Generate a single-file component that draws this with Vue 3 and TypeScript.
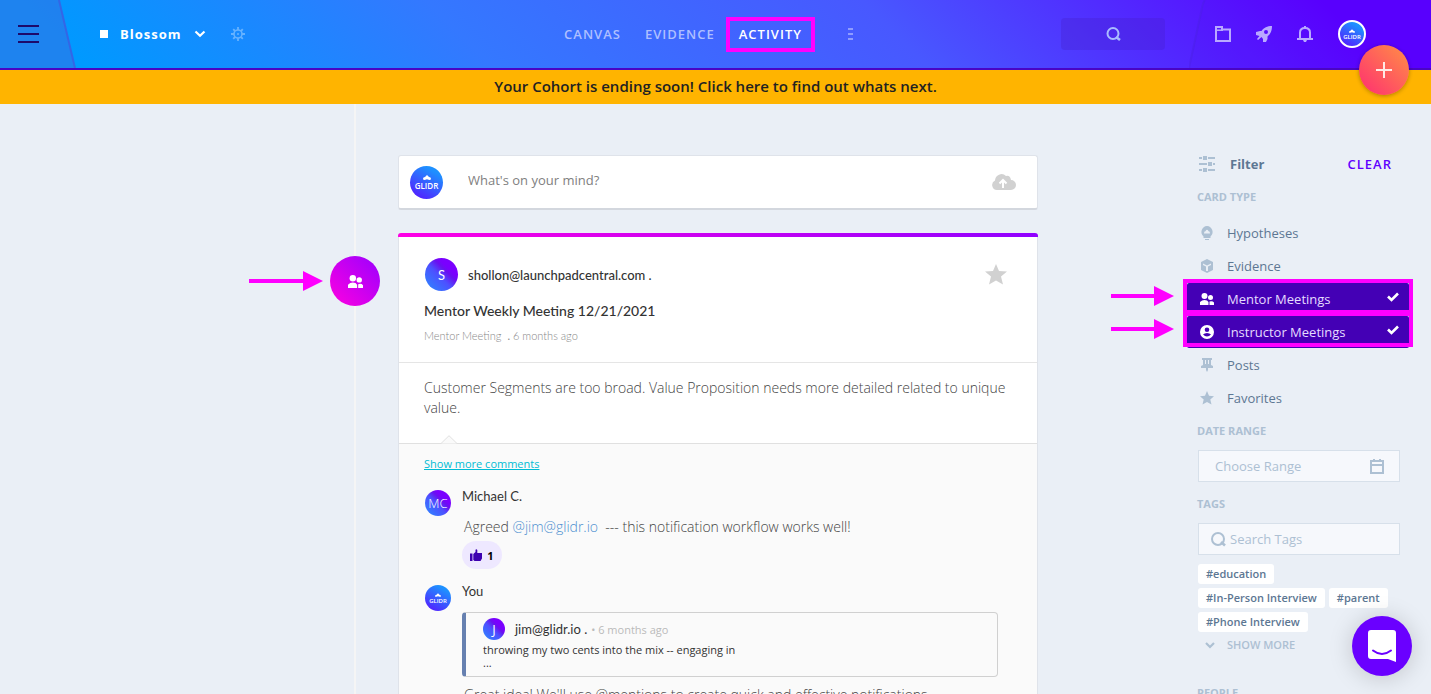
<script setup lang="ts">
import { ref } from 'vue'

interface CardType {
  id: string
  label: string
  selected: boolean
}

const navItems = ['Canvas', 'Evidence', 'Activity']
const activeNav = ref('Activity')

const cardTypes = ref<CardType[]>([
  { id: 'hypotheses', label: 'Hypotheses', selected: false },
  { id: 'evidence', label: 'Evidence', selected: false },
  { id: 'mentor', label: 'Mentor Meetings', selected: true },
  { id: 'instructor', label: 'Instructor Meetings', selected: true },
  { id: 'posts', label: 'Posts', selected: false },
  { id: 'favorites', label: 'Favorites', selected: false },
])

const tags = ['#education', '#In-Person Interview', '#parent', '#Phone Interview']
const draft = ref('')
const range = ref('')
const tagQuery = ref('')

function clearFilters(): void {
  cardTypes.value.forEach((t) => (t.selected = false))
}
</script>

<template>
  <div class="page">
    <header class="topbar">
      <svg class="slant slant-left" viewBox="0 0 76 68" aria-hidden="true">
        <path d="M0 0H59L75 68H0Z" fill="#4a62d8" fill-opacity=".4" />
        <path d="M59 0L75 68" stroke="#3c5ce2" stroke-width="2" stroke-opacity=".8" />
      </svg>
      <svg class="slant slant-right" viewBox="0 0 242 68" aria-hidden="true">
        <path d="M15 0H242V68H0Z" fill="#5000e0" fill-opacity=".08" />
        <path d="M16 0Q14 2 13 8L0 68" fill="none" stroke="#4a20e0" stroke-width="2" stroke-opacity=".4" />
      </svg>

      <div class="side">
        <button class="icon-btn menu" aria-label="Menu">
          <svg width="22" height="20" viewBox="0 0 22 20"><path d="M0 2H21M0 10H21M0 18H21" stroke="#1d0a6b" stroke-width="2" /></svg>
        </button>
        <button class="project">
          <span class="square"></span>
          <span>Blossom</span>
          <svg width="12" height="8" viewBox="0 0 12 8"><path d="M1.5 1.5L6 5.7L10.500 1.500" fill="none" stroke="#fff" stroke-width="2.200" /></svg>
        </button>
        <button class="icon-btn gear" aria-label="Settings">
          <svg width="14" height="14" viewBox="0 0 14 14" fill="none" stroke="#66b2ff">
            <circle cx="7" cy="7" r="4" stroke-width="1.600" />
            <circle cx="7" cy="7" r="1" fill="#66b2ff" stroke="none" />
            <path d="M7 0V3M7 11V14M0 7H3M11 7H14M2.200 2.200L4 4M10 10L11.800 11.800M2.200 11.800L4 10M10 4L11.800 2.200" stroke-width="1.800" />
          </svg>
        </button>
      </div>

      <nav class="nav">
        <a v-for="item in navItems" :key="item" href="#" :class="{ active: item === activeNav }" @click.prevent="activeNav = item">{{ item }}<span v-if="item === 'Activity'" class="callout callout-nav"></span></a>
        <button class="icon-btn more" aria-label="More">
          <svg width="5" height="13" viewBox="0 0 5 13" fill="#8f9cff"><path d="M0 0H5V2H0ZM0 5H5V7H0ZM0 10H5V12H0Z" /></svg>
        </button>
      </nav>

      <div class="side side-right">
        <button class="search" aria-label="Search">
          <svg width="15" height="15" viewBox="0 0 15 15" fill="none" stroke="#a9bcff" stroke-width="2"><circle cx="7" cy="6.500" r="5.500" /><path d="M10 10L14 13" stroke-width="2.600" /></svg>
        </button>
        <div class="tools">
          <button class="icon-btn" aria-label="Files">
            <svg width="16" height="16" viewBox="0 0 16 16"><path d="M1 15V1H7V3.500H15V15Z" fill="none" stroke="#b9a9ff" stroke-width="2" /><path d="M1 4.200H8" stroke="#b9a9ff" stroke-width="1.500" /></svg>
          </button>
          <button class="icon-btn" aria-label="Launch">
            <svg width="16" height="16" viewBox="0 0 16 16" fill="#b9a9ff"><path fill-rule="evenodd" d="M16 0C16 4 15 7.500 11.500 10.500V13L10 16H7V13L5.500 11L2 14L1 13L3.500 10L0 9V6L4 5H5.500C8 1.500 11 0 16 0ZM10 4A2 2 0 1 0 10 8A2 2 0 1 0 10 4Z" /></svg>
          </button>
          <button class="icon-btn" aria-label="Notifications">
            <svg width="16" height="16" viewBox="0 0 16 16"><path d="M3 13V6.500C3 3.500 5 2 8 2S13 3.500 13 6.500V13" fill="none" stroke="#b9a9ff" stroke-width="2" /><path d="M0 12H16V14H0ZM6 14H10L9 16H7ZM7 0H9V2H7Z" fill="#b9a9ff" /></svg>
          </button>
        </div>
        <button class="avatar glidr me" aria-label="Account">
          <svg viewBox="0 0 10 6"><path d="M5 0L7.500 2.500Q10 3 10 4.500Q10 6 8 6L5 5.200L2 6Q0 6 0 4.500Q0 3 2.500 2.500Z" fill="#fff" /></svg><span>GLIDR</span>
        </button>
      </div>
      <button class="add" aria-label="Add">
        <svg width="16" height="16" viewBox="0 0 16 16"><path d="M8 0V16M0 8H16" stroke="#ffe9e4" stroke-width="2" /></svg>
      </button>
    </header>

    <a class="banner" href="#">Your Cohort is ending soon! Click here to find out whats next.</a>

    <main class="content">
      <div class="timeline">
        <div class="event">
          <svg width="74" height="20" viewBox="0 0 74 20" fill="#f0f"><path d="M0 8H54V0L74 10L54 20V12H0Z" /></svg>
          <span class="marker">
            <svg width="15" height="13" viewBox="0 0 14 12" fill="#fff"><circle cx="4.500" cy="3" r="3" /><circle cx="10.500" cy="4.500" r="2.500" /><path d="M0 12V9Q2 7 4.500 7Q7.500 7 8.500 9V12ZM9.500 12V8.500Q12.500 7.500 14 9.500V12Z" /></svg>
          </span>
        </div>
      </div>

      <section class="feed">
        <form class="compose" @submit.prevent>
          <span class="avatar glidr large"><svg viewBox="0 0 10 6"><path d="M5 0L7.500 2.500Q10 3 10 4.500Q10 6 8 6L5 5.200L2 6Q0 6 0 4.500Q0 3 2.500 2.500Z" fill="#fff" /></svg><span>GLIDR</span></span>
          <input v-model="draft" type="text" placeholder="What's on your mind?" aria-label="What's on your mind?" />
          <button class="icon-btn" aria-label="Upload">
            <svg width="24" height="16" viewBox="0 0 24 16"><path d="M5 16A5 5 0 0 1 3 6.500A6.500 6.500 0 0 1 14 2Q18 1 19 6A5 5 0 0 1 19 16Z" fill="#d1d1d1" /><path d="M11 14V6.500M7.500 9.500L11 6L14.500 9.500" fill="none" stroke="#fff" stroke-width="2" /></svg>
          </button>
        </form>

        <article class="card">
          <header class="card-head">
            <div class="author">
              <span class="avatar letter large">S</span>
              <h3>shollon@launchpadcentral.com .</h3>
              <button class="icon-btn star" aria-label="Favorite">
                <svg width="22" height="21" viewBox="0 0 22 21"><path d="M11 0L14 7L22 7.500L16 12.500L18 20.500L11 16.500L4 20.500L6 12.500L0 7.500L8 7Z" fill="#d1d1d1" /></svg>
              </button>
            </div>
            <h2>Mentor Weekly Meeting 12/21/2021</h2>
            <p class="meta">Mentor Meeting &nbsp;<b>.</b> 6 months ago</p>
          </header>
          <p class="card-text">Customer Segments are too broad. Value Proposition needs more detailed related to unique value.</p>
          <section class="comments">
            <svg class="notch" width="16" height="9" viewBox="0 0 16 9"><path d="M0 8.500L8 .7L16 8.500" fill="#fafafa" stroke="#e0e0e0" /></svg>
            <a class="show-comments" href="#">Show more comments</a>

            <div class="comment">
              <span class="avatar letter small">MC</span>
              <div class="comment-main">
                <h4>Michael C.</h4>
                <p>Agreed <a href="#">@jim@glidr.io</a>&nbsp; --- this notification workflow works well!</p>
                <button class="like">
                  <svg width="12" height="12" viewBox="0 0 12 12" fill="#3d00b0"><path d="M0 4.500H2.500V12H0ZM3.300 5L5.500 3V.8Q6.500-.5 7.300 1V4H12V9.500L10.500 12H4.500L3.300 11Z" /></svg>
                  <span>1</span>
                </button>
              </div>
            </div>

            <div class="comment">
              <span class="avatar glidr small"><svg viewBox="0 0 10 6"><path d="M5 0L7.500 2.500Q10 3 10 4.500Q10 6 8 6L5 5.200L2 6Q0 6 0 4.500Q0 3 2.500 2.500Z" fill="#fff" /></svg><span>GLIDR</span></span>
              <div class="comment-main">
                <h4>You</h4>
                <blockquote>
                  <div class="quote-head">
                    <span class="avatar letter tiny">J</span>
                    <h4>jim@glidr.io .</h4>
                    <span class="ago">• 6 months ago</span>
                  </div>
                  <p>throwing my two cents into the mix -- engaging in<br />...</p>
                </blockquote>
                <p class="reply">Great idea! We'll use @mentions to create quick and effective notifications.</p>
              </div>
            </div>
          </section>
        </article>
      </section>

      <aside class="filters">
        <div class="filter-head">
          <svg width="16" height="16" viewBox="0 0 16 16" fill="#adc0d3"><path d="M0 1H3V3H0ZM9 1H16V3H9ZM4 0H8V4H4ZM0 7H8V9H0ZM14 7H16V9H14ZM9 6H13V10H9ZM0 13H3V15H0ZM9 13H16V15H9ZM4 12H8V16H4Z" /></svg>
          <h3>Filter</h3>
          <button class="clear" @click="clearFilters">CLEAR</button>
        </div>

        <h4 class="label">CARD TYPE</h4>
        <ul class="types">
          <li v-for="type in cardTypes" :key="type.id">
            <button :class="{ selected: type.selected }" @click="type.selected = !type.selected">
              <svg class="type-icon" width="14" height="14" viewBox="0 0 14 14">
                <path v-if="type.id === 'hypotheses'" fill-rule="evenodd" d="M7 0A6 6 0 0 1 10.500 10.500V12H3.500V10.500A6 6 0 0 1 7 0ZM4 7.500H10Q10 5 8.500 5.200Q7 2.500 5.500 5.200Q4 5 4 7.500ZM5 13H9V14H5Z" />
                <path v-else-if="type.id === 'evidence'" fill-rule="evenodd" d="M7 0L13 3V11L7 14L1 11V3ZM3 4.500V6L6 7.500V12H8V7.500L11 6V4.500L7 6.500Z" />
                <template v-else-if="type.id === 'mentor'"><circle cx="4.500" cy="4" r="3" /><circle cx="10.500" cy="5.500" r="2.500" /><path d="M0 13V10Q2 8 4.500 8Q7.500 8 8.500 10V13ZM9.500 13V9.500Q12.500 8.500 14 10.500V13Z" /></template>
                <path v-else-if="type.id === 'instructor'" fill-rule="evenodd" d="M7 0A7 7 0 1 1 7 14A7 7 0 1 1 7 0ZM7 2.500A2.300 2.300 0 1 0 7 7.100A2.300 2.300 0 1 0 7 2.500ZM3 9.500Q7 13.500 11 9.500Q9.500 8 7 8T3 9.500Z" />
                <path v-else-if="type.id === 'posts'" fill-rule="evenodd" d="M2 0H12V2H11V7L13 8V10H8V12L7 14L6 12V10H1V8L3 7V2H2ZM5 2V6H6V2ZM8 2V6H9V2Z" />
                <path v-else d="M7 0L9 4.700L14 5.200L10.300 8.500L11.500 13.500L7 11L2.500 13.500L3.700 8.500L0 5.200L5 4.700Z" />
              </svg>
              <span>{{ type.label }}</span>
              <svg v-if="type.selected" class="tick" width="12" height="10" viewBox="0 0 12 10"><path d="M1 4.500L4.500 8L11 1.500" fill="none" stroke="#fff" stroke-width="2.600" /></svg>
            </button>
            <template v-if="type.id === 'mentor' || type.id === 'instructor'">
              <span class="callout callout-row"></span>
              <svg class="pointer" width="63" height="20" viewBox="0 0 63 20" fill="#f0f"><path d="M0 8H43V0L63 10L43 20V12H0Z" /></svg>
            </template>
          </li>
        </ul>

        <label class="label" for="range">DATE RANGE</label>
        <div class="field">
          <input id="range" v-model="range" type="text" placeholder="Choose Range" />
          <svg width="14" height="15" viewBox="0 0 14 15"><path d="M1 2H13V14H1ZM1 6H13" fill="none" stroke="#adc0d3" stroke-width="2" /><path d="M3 0H5V3H3ZM9 0H11V3H9Z" fill="#adc0d3" /></svg>
        </div>

        <label class="label" for="tags">TAGS</label>
        <div class="field">
          <svg width="15" height="15" viewBox="0 0 15 15" fill="none" stroke="#adc0d3" stroke-width="2"><circle cx="7" cy="7" r="6" /><path d="M10 10L14 13.500" stroke-width="2.600" /></svg>
          <input id="tags" v-model="tagQuery" type="text" placeholder="Search Tags" />
        </div>
        <div class="tags">
          <button v-for="tag in tags" :key="tag">{{ tag }}</button>
        </div>
        <button class="show-more">
          <svg width="10" height="7" viewBox="0 0 10 7"><path d="M1 1L5 5L9 1" fill="none" stroke="#adc0d3" stroke-width="2.200" /></svg>
          SHOW MORE
        </button>
        <h4 class="label people">PEOPLE</h4>
      </aside>
    </main>

    <button class="chat" aria-label="Chat">
      <svg width="28" height="32" viewBox="0 0 28 32"><path d="M3 0H25Q28 0 28 3V32L20 29H3Q0 29 0 26V3Q0 0 3 0Z" fill="#fff" /><path d="M5 20.500Q14 27.500 23 20.500" fill="none" stroke="#6a00ff" stroke-width="2" stroke-linecap="round" /></svg>
    </button>
  </div>
</template>

<style>
html,
body {
  overflow: hidden;
}
</style>

<style scoped>
* {
  box-sizing: border-box;
}

.page {
  display: flex;
  flex-direction: column;
  height: 100vh;
  overflow: hidden;
  background: #eaeff6;
  color: #333;
  font-family: 'Open Sans', 'Noto Sans', sans-serif;
  font-size: 13px;
}

h2,
h3,
h4,
p,
ul,
blockquote {
  margin: 0;
  padding: 0;
}

button,
input {
  font-family: inherit;
  font-size: inherit;
  padding: 0;
  border: 0;
  background: none;
}

svg {
  display: block;
  flex: none;
}

.icon-btn {
  display: flex;
  flex: none;
}

/* Top bar */
.topbar {
  position: relative;
  z-index: 2;
  display: flex;
  align-items: center;
  flex: none;
  height: 70px;
  border-bottom: 2px solid #4a05c4;
  background: linear-gradient(45deg, #0099ff 6%, #3478ff 33%, #4858ff 62%, #5a00ff 93%);
}

.slant {
  position: absolute;
  top: 0;
  height: 68px;
}

.slant-left {
  left: 0;
}

.slant-right {
  right: 0;
}

.side {
  position: relative;
  display: flex;
  flex: 1;
  align-items: center;
}

.menu {
  margin-left: 18px;
}

.project {
  display: flex;
  align-items: center;
  margin-left: 60px;
  color: #fff;
  font-weight: 700;
  letter-spacing: 1px;
}

.square {
  width: 8px;
  height: 8px;
  margin-right: 12px;
  background: #fff;
}

.project svg {
  margin-left: 12px;
}

.gear {
  margin-left: 25px;
}

.nav {
  display: flex;
  align-items: center;
  gap: 24px;
  margin-right: 14px;
}

.nav a {
  position: relative;
  color: #aebfff;
  font-size: 13px;
  font-weight: 600;
  letter-spacing: 1px;
  text-decoration: none;
  text-transform: uppercase;
}

.nav a.active {
  color: #fff;
}

.more {
  margin-left: 22px;
}

.callout {
  position: absolute;
  border: 4px solid #f0f;
  pointer-events: none;
}

.callout-nav {
  inset: -8px -13px -9px;
}

.side-right {
  justify-content: flex-end;
}

.search {
  display: flex;
  align-items: center;
  justify-content: center;
  width: 104px;
  height: 32px;
  border-radius: 4px;
  background: rgba(70, 30, 200, 0.3);
}

.tools {
  display: flex;
  gap: 25px;
  margin: 0 25px 0 50px;
}

.avatar {
  display: flex;
  flex: none;
  align-items: center;
  justify-content: center;
  border-radius: 50%;
  color: #fff;
}

.letter {
  background: linear-gradient(45deg, #2a8cff, #4d50ff 45%, #6a10f0 62%, #7a00ff 70%);
}

.glidr {
  flex-direction: column;
  gap: 2px;
  background: linear-gradient(30deg, #5a10ff, #1e90ff 80%);
  font-size: 8px;
  font-weight: 600;
  line-height: 8px;
}

.glidr svg {
  width: 8px;
  height: 5px;
}

.large {
  width: 33px;
  height: 33px;
}

.small {
  width: 26px;
  height: 26px;
}

.tiny {
  width: 22px;
  height: 22px;
}

.glidr.small,
.me {
  gap: 1px;
  font-size: 6px;
  line-height: 6px;
}

.glidr.small svg,
.me svg {
  width: 6px;
  height: 4px;
}

.me {
  width: 28px;
  height: 28px;
  margin-right: 65px;
  border: 2px solid #fff;
}

.add {
  position: absolute;
  top: 45px;
  right: 22px;
  display: flex;
  align-items: center;
  justify-content: center;
  width: 50px;
  height: 50px;
  border-radius: 50%;
  background: linear-gradient(45deg, #ff2d72, #ff9045);
  box-shadow: 0 1px 4px rgba(0, 0, 0, 0.3);
}

.banner {
  flex: none;
  padding-bottom: 2px;
  background: #ffb400;
  color: #222;
  font-size: 15px;
  font-weight: 600;
  line-height: 32px;
  text-align: center;
  text-decoration: none;
}

/* Page body */
.content {
  display: grid;
  flex: 1;
  grid-template-columns: minmax(0, 1fr) minmax(0, 640px) minmax(0, 1fr);
  min-height: 0;
  padding-left: 5px;
}

.timeline {
  padding: 152px 18px 0 0;
  background: linear-gradient(#f5f5f5, #f5f5f5) right 42px top / 2px 100% no-repeat;
}

.event {
  display: flex;
  align-items: center;
  justify-content: flex-end;
  gap: 7px;
}

.marker {
  display: flex;
  align-items: center;
  justify-content: center;
  width: 50px;
  height: 50px;
  border-radius: 50%;
  background: linear-gradient(45deg, #ff00e0, #9a00ff);
}

.feed {
  padding-top: 51px;
}

.compose {
  display: flex;
  align-items: center;
  height: 55px;
  padding: 0 21px 0 11px;
  border: 1px solid #dfe3ea;
  border-bottom: 2px solid #d3d7de;
  border-radius: 3px;
  background: #fff;
}

.compose input {
  flex: 1;
  min-width: 0;
  margin: 0 20px 4px 25px;
  outline: 0;
}

.compose input::placeholder {
  color: #808080;
  opacity: 1;
}

.card {
  margin-top: 23px;
  border: 1px solid #dfe3ea;
  border-top: 0;
  border-radius: 3px;
  background: #fff;
}

.card::before {
  display: block;
  height: 4px;
  margin: 0 -1px;
  border-radius: 3px 3px 0 0;
  background: linear-gradient(90deg, #ff00e5, #9000ff);
  content: '';
}

.card-head {
  padding: 21px 25px 17px;
  border-bottom: 1px solid #e5e5e5;
  font-family: Lato, sans-serif;
}

.author {
  display: flex;
  align-items: center;
  gap: 10px;
  padding-left: 1px;
}

.author h3 {
  flex: 1;
  font-size: 13px;
  font-weight: 500;
  line-height: 20px;
}

.star {
  margin-right: 5px;
}

.card-head h2 {
  margin-top: 8px;
  font-size: 14px;
  font-weight: 500;
  line-height: 24px;
}

.meta {
  margin-top: 4px;
  color: #888;
  font-size: 11px;
  font-weight: 300;
  line-height: 18px;
}

.card-text {
  padding: 15px 25px 25px;
  color: #444;
  font-size: 14px;
  font-weight: 300;
  line-height: 20px;
}

.comments {
  position: relative;
  padding: 12px 25px 20px;
  border-top: 1px solid #e0e0e0;
  background: #fafafa;
}

.notch {
  position: absolute;
  top: -9px;
  left: 42px;
}

.show-comments {
  display: block;
  width: max-content;
  margin-bottom: 14px;
  color: #00bcd4;
  font-size: 11px;
  line-height: 16px;
}

.comment {
  display: flex;
  align-items: flex-start;
  gap: 11px;
  margin-bottom: 12px;
  padding-left: 1px;
}

.comment > .avatar {
  margin-top: 4px;
}

.comment > .letter {
  font-weight: 300;
}

.comment-main {
  flex: 1;
  padding-right: 14px;
}

.comment h4 {
  font-family: Lato, sans-serif;
  font-size: 13px;
  font-weight: 400;
  line-height: 20px;
}

.comment-main > p {
  margin: 11px 0 4px;
  padding-left: 2px;
  color: #444;
  font-size: 14px;
  font-weight: 300;
  line-height: 20px;
}

.comment-main > p a {
  color: #4d90d0;
  text-decoration: none;
}

.like {
  display: flex;
  align-items: center;
  justify-content: center;
  gap: 5px;
  width: 40px;
  height: 28px;
  border-radius: 14px;
  background: #eee8ff;
  font-size: 11px;
  font-weight: 700;
}

blockquote {
  margin-top: 11px;
  padding: 5px 17px 7px;
  border: 1px solid #d0d0d0;
  border-left: 4px solid #6680b0;
  border-radius: 4px;
  font-size: 11px;
  line-height: 13px;
}

.quote-head {
  display: flex;
  align-items: center;
  margin-bottom: 3px;
}

.quote-head .avatar {
  font-size: 13px;
}

.quote-head h4 {
  margin: 0 4px 0 10px;
}

.ago {
  color: #bbb;
}

.comment-main .reply {
  margin-top: 8px;
}

/* Filter column */
.filters {
  justify-self: end;
  width: 222px;
  margin-right: 22px;
  padding: 50px 0 0;
  color: #5d7793;
}

.filter-head {
  display: flex;
  align-items: center;
  padding: 0 17px 0 12px;
  line-height: 20px;
}

.filter-head h3 {
  flex: 1;
  margin-left: 15px;
  font-size: 13px;
  font-weight: 700;
}

.clear {
  color: #6000ff;
  font-size: 13px;
  font-weight: 600;
  letter-spacing: 1px;
  line-height: 20px;
}

.label {
  display: block;
  padding-left: 10px;
  color: #adc0d3;
  font-size: 11px;
  font-weight: 700;
  line-height: 16px;
}

.filter-head + .label {
  margin-top: 15px;
}

.types {
  margin: 12px 0 8px;
  list-style: none;
}

.types li {
  position: relative;
  padding-bottom: 1px;
}

.types button {
  display: flex;
  align-items: center;
  width: 100%;
  height: 32px;
  padding: 0 10px 0 13px;
  border-radius: 2px;
  color: inherit;
  fill: #adc0d3;
}

.types button.selected {
  background: #4400b5;
  color: #e4dcff;
  fill: #fff;
}

.type-icon {
  margin-right: 13px;
}

.tick {
  margin: 0 0 4px auto;
}

.callout-row {
  inset: -4px -4px 2px;
}

.pointer {
  position: absolute;
  top: 3px;
  right: 235px;
}

.field {
  display: flex;
  align-items: center;
  height: 32px;
  margin: 11px 9px 14px 11px;
  padding: 0 15px 0 12px;
  border: 1px solid #d7e0ea;
  background: #f6f8fc;
}

.field input {
  flex: 1;
  min-width: 0;
  padding-left: 4px;
  outline: 0;
}

.field input::placeholder {
  color: #adc0d3;
  opacity: 1;
}

.field + .tags {
  margin-top: -5px;
}

.tags {
  display: flex;
  flex-wrap: wrap;
  gap: 4px;
  padding: 0 9px 0 11px;
}

.tags button {
  height: 20px;
  padding: 0 8px;
  border-radius: 3px;
  background: #fff;
  color: #5d7793;
  font-size: 11px;
  font-weight: 600;
  line-height: 20px;
}

.show-more {
  display: flex;
  align-items: center;
  gap: 12px;
  margin: 5px 0 0 18px;
  color: #adc0d3;
  font-size: 11px;
  font-weight: 600;
  line-height: 16px;
}

.people {
  margin-top: 32px;
}

.chat {
  position: fixed;
  right: 19px;
  bottom: 18px;
  z-index: 3;
  display: flex;
  align-items: center;
  justify-content: center;
  width: 60px;
  height: 60px;
  border-radius: 50%;
  background: #6a00ff;
  box-shadow: 0 2px 24px rgba(0, 0, 0, 0.18);
}
</style>
